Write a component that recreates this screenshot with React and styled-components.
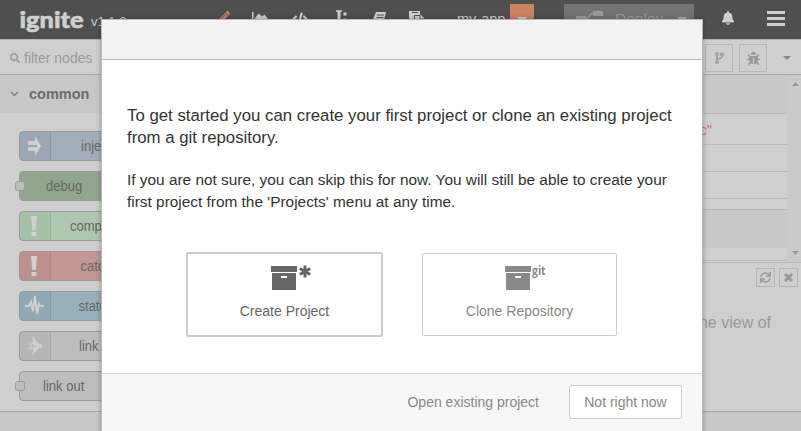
import React from "react";
import styled, { createGlobalStyle, css } from "styled-components";
import {
  FaPencilAlt, FaCode, FaBell, FaSearch, FaBug, FaSync,
} from "react-icons/fa";

const GlobalStyle = createGlobalStyle`
  *, *::before, *::after { box-sizing: border-box; }
  html, body { margin: 0; overflow: hidden; }
  body { font-family: "Liberation Sans", Arial, sans-serif; font-size: 14px; color: #333; }
  svg { display: block; flex: none; overflow: visible; }
`;

const Page = styled.div`
  position: relative;
  width: 801px;
  height: 431px;
  overflow: hidden;
  display: grid;
  grid-template-rows: 39px 1fr;
  background: #cfcfcf;
`;

const Header = styled.header`
  background: #4f4f4f;
  display: flex;
  align-items: flex-start;
  color: #cfcfcf;
`;
const Logo = styled.div`
  width: 71px;
  padding-left: 19px;
`;
const Version = styled.div`
  width: 129px;
  padding: 13px 0 0 20px;
  font-size: 13px;
  line-height: 17px;
`;
const Tools = styled.div`
  display: flex;
  width: 237px;
  height: 39px;
  padding: 11px 0 0 18px;
`;
const Tool = styled.div`
  width: ${(p) => p.$w}px;
  color: ${(p) => p.$color || "#cfcfcf"};
`;
const AppName = styled.div`
  width: 73px;
  padding: 10px 0 0 20px;
  line-height: 18px;
  font-size: 14.5px;
`;
const Caret = styled.span`
  width: 0;
  height: 0;
  border: ${(p) => p.$size}px solid transparent;
  border-top-color: ${(p) => p.$color};
  border-bottom: 0;
`;
const AppMenu = styled.div`
  width: 24px;
  height: 31px;
  margin: 4px 30px 0 0;
  background: #cd8262;
  display: flex;
  justify-content: center;
  padding-top: 13px;
`;
const Deploy = styled.div`
  width: 130px;
  height: 31px;
  margin: 4px 27px 0 0;
  background: #747474;
  color: #9a9a9a;
  display: flex;
  align-items: flex-start;
  padding: 6px 7px 0 12px;
  font-size: 15.5px;
  line-height: 18px;
`;
const DeployText = styled.span`
  flex: 1;
  padding-left: 11px;
`;
const DeployCaret = styled.span`
  padding-top: 7px;
  display: flex;
`;
const Bell = styled.div`
  width: 46px;
  padding-top: 11px;
`;
const Burger = styled.div`
  display: grid;
  gap: 3px;
  width: 18px;
  padding-top: 11px;
`;
const Bar = styled.i`
  height: 3px;
  background: #cfcfcf;
`;

const Workspace = styled.main`
  display: flex;
  justify-content: space-between;
  border-top: 1px solid #b3b3b3;
  min-height: 0;
`;
const Palette = styled.aside`
  width: 180px;
  display: flex;
  flex-direction: column;
`;
const Filter = styled.div`
  height: 35px;
  padding: 2px 0 0 10px;
  display: flex;
  align-items: center;
  gap: 4px;
  border-bottom: 1px solid #a9a9a9;
  color: #999;
  line-height: 20px;
`;
const Category = styled.div`
  height: 38px;
  background: #c8c8c8;
  display: flex;
  align-items: center;
  gap: 10px;
  padding: 0 0 1px 10px;
  font-size: 14.500px;
  font-weight: bold;
  color: #6c6c6c;
`;
const NodeList = styled.div`
  flex: 1;
  padding: 18px 0 0 19px;
  display: flex;
  flex-direction: column;
  gap: 10px;
`;
const Footer = styled.div`
  height: 20px;
  background: #c8c8c8;
  border-top: 1px solid #a8a8a8;
`;
const Node = styled.div`
  position: relative;
  width: 122px;
  height: 30px;
  border: 1px solid #999;
  border-radius: 4px;
  background: ${(p) => p.$bg};
  display: flex;
  align-items: center;
  font-size: 14px;
  color: #666;
`;
const NodeIcon = styled.span`
  width: 31px;
  height: 28px;
  flex: none;
  background: rgba(0, 0, 0, 0.035);
  border-right: 1px solid rgba(0, 0, 0, 0.08);
  padding: 3px 0 0 4px;
`;
const NodeLabel = styled.span`
  padding-left: ${(p) => p.$pad}px;
  white-space: nowrap;
  transform: scaleX(0.93);
  transform-origin: ${(p) => p.$pad}px 50%;
`;
const Port = styled.i`
  position: absolute;
  left: -5px;
  top: 9px;
  width: 10px;
  height: 10px;
  border: 1px solid #999;
  border-radius: 3px;
  background: #bebebe;
`;

const Sidebar = styled.aside`
  width: 301px;
  display: flex;
  flex-direction: column;
`;
const Tabs = styled.div`
  height: 35px;
  border-bottom: 1px solid #a9a9a9;
  display: flex;
  justify-content: flex-end;
  padding: 4px 10px 0 0;
`;
const square = css`
  border: 1px solid #b6b6b6;
  display: grid;
  place-items: center;
  color: #999;
`;
const Tab = styled.div`
  ${square}
  width: 28px;
  height: 28px;
  margin-right: 6px;
`;
const TabCaret = styled.div`
  display: flex;
  padding: 12px 0 0 10px;
`;
const InfoPane = styled.div`
  height: 188px;
  display: flex;
  border-bottom: 1px solid #b8b8b8;
`;
const Rows = styled.div`
  flex: 1;
  display: flex;
  flex-direction: column;
`;
const Row = styled.div`
  height: ${(p) => p.$h}px;
  background: ${(p) => (p.$dark ? "#c8c8c8" : "#cfcfcf")};
  border-bottom: ${(p) => (p.$line ? "1px solid #b9b9b9" : "0")};
  display: flex;
  align-items: center;
  justify-content: flex-end;
  padding: 2px 75px 0 0;
  color: #d36d58;
  font-size: 14px;
`;
const Scroll = styled.div`
  width: 14px;
  background: #cacaca;
  display: flex;
  flex-direction: column;
  justify-content: space-between;
  padding: 7px 0 7px 5px;
`;
const HelpPane = styled.div`
  flex: 1;
  color: #999;
`;
const HelpButtons = styled.div`
  display: flex;
  justify-content: flex-end;
  gap: 4px;
  padding: 5px 3px 0 0;
`;
const SmallButton = styled.div`
  ${square}
  width: 19px;
  height: 19px;
`;
const HelpText = styled.div`
  padding: 26px 30px 0 0;
  text-align: right;
  font-size: 16px;
  line-height: 20px;
`;

const Dialog = styled.section`
  position: absolute;
  left: 101px;
  top: 19px;
  width: 602px;
  height: 430px;
  border: 1px solid #b9b9b9;
  background: #fff;
  box-shadow: 0 0 5px rgba(0, 0, 0, 0.3);
  display: flex;
  flex-direction: column;
`;
const DialogTitle = styled.div`
  height: 40px;
  background: #f2f2f2;
  border-bottom: 1px solid #b9b9b9;
`;
const DialogBody = styled.div`
  height: 313px;
  padding: 45px 25px 0;
`;
const Intro = styled.p`
  margin: 0 0 20px;
  font-size: ${(p) => p.$size}px;
  line-height: 22px;
  color: #333;
  white-space: nowrap;
`;
const Choices = styled.div`
  display: flex;
  gap: 39px;
  padding: 19px 0 0 59px;
`;
const Choice = styled.div`
  width: ${(p) => (p.$active ? 197 : 195)}px;
  height: ${(p) => (p.$active ? 85 : 83)}px;
  margin-top: ${(p) => (p.$active ? 0 : 1)}px;
  border: ${(p) => (p.$active ? 2 : 1)}px solid #ccc;
  border-radius: 2px;
  color: ${(p) => (p.$active ? "#666" : "#888")};
  display: flex;
  flex-direction: column;
  align-items: center;
  font-size: 14px;
`;
const ChoiceIcon = styled.div`
  display: flex;
  gap: ${(p) => p.$gap}px;
  height: 36px;
  padding: 12px 0 0 12px;
`;
const ChoiceText = styled.div`
  line-height: 20px;
  padding-top: 11px;
`;
const Git = styled.span`
  font: bold 13px/14px "Open Sans", sans-serif;
  margin-top: -3px;
  width: 14px;
  transform: scaleX(0.8);
  transform-origin: 0 0;
`;
const Actions = styled.div`
  flex: 1;
  background: #f7f7f7;
  border-top: 1px solid #dbdbdb;
  display: flex;
  justify-content: flex-end;
  gap: 30px;
  padding: 11px 20px 0 0;
  color: #888;
  line-height: 34px;
`;
const Button = styled.div`
  width: 113px;
  height: 34px;
  line-height: 32px;
  border: 1px solid #ccc;
  border-radius: 2px;
  background: #fff;
  text-align: center;
`;

const Wordmark = () => (
  <svg width="68" height="39" fill="#cfcfcf" stroke="#cfcfcf" strokeWidth="0.6">
    <text x="0.500" y="27.500" fontFamily="Lato" fontWeight="900" fontSize="23" textLength="64" lengthAdjust="spacingAndGlyphs">ignite</text>
  </svg>
);
const Archive = () => (
  <svg width="26" height="24" fill="currentColor">
    <path d="M0 0h26v6H0zM1 7h24v17H1zM10 10v2h6v-2z" fillRule="evenodd" />
  </svg>
);
const Asterisk = () => (
  <svg width="12" height="12" stroke="currentColor" strokeWidth="3">
    <path d="M6 -0.500v12M0.800 2.500l10.400 6M11.200 2.500l-10.400 6" />
  </svg>
);
const Area = () => (
  <svg width="16" height="16" fill="currentColor">
    <path d="M0 1h1.500v12H16v1.500H0zM3 12V7l3.500-4.500L10 5.500l2.500-2L16 8v4z" />
  </svg>
);
const Cursor = () => (
  <svg width="12" height="16" fill="none" stroke="currentColor" strokeWidth="1.500">
    <path d="M0 0h6M0 15h6M3 0v15" />
    <path d="M3 0v15M7.500 3h3M7.500 9h3" strokeWidth="3" />
  </svg>
);
const Book = () => (
  <svg width="15" height="14" fill="currentColor">
    <path d="M4 1h10l-3 12H1L0 11z" />
    <path d="M5 4h7M4.500 6.500h7" stroke="#4f4f4f" />
  </svg>
);
const Paste = () => (
  <svg width="16" height="16" fill="currentColor">
    <path d="M0 0h11v4h1l3 3v8H6v-3H0z" />
    <path d="M3 1.500h6M5.500 12V4.500H11M11 4.500V8h4" stroke="#4f4f4f" fill="none" />
  </svg>
);
const Flow = () => (
  <svg width="28" height="18" fill="#9a9a9a">
    <path d="M0 6h10v5H0zM17 1h10v5H17zM17 12h10v5H17z" />
    <path d="M10 8.500C15 8.500 12 3.500 17 3.500M10 8.500C15 8.500 12 14.500 17 14.500" fill="none" stroke="#9a9a9a" strokeWidth="1.500" />
  </svg>
);
const Fork = () => (
  <svg width="9" height="12" fill="none" stroke="currentColor" strokeWidth="1.300">
    <circle cx="2" cy="2" r="1.300" /><circle cx="7" cy="2.500" r="1.300" /><circle cx="2" cy="10" r="1.300" />
    <path d="M2 3.500v5M7 4c0 3-4.500 2-5 4.500" strokeWidth="1.600" />
  </svg>
);
const Cross = () => (
  <svg width="9" height="9" stroke="currentColor" strokeWidth="3"><path d="M1 1l7 7M8 1L1 8" /></svg>
);
const Triangle = ({ up }) => (
  <svg width="7" height="4" fill="#999"><path d={up ? "M0 4L3.500 0L7 4z" : "M0 0H7L3.500 4z"} /></svg>
);
const Chevron = () => (
  <svg width="9" height="6" fill="none" stroke="#808080" strokeWidth="1.500"><path d="M1 1l3.500 3.500L8 1" /></svg>
);

const glyphs = {
  arrow: (
    <>
      <path d="M4 6h7V1l6 10-6 10v-5H4v-4h9v-2H4z" />
      <path d="M4 10h9v2H4z" fill="#9aa4b0" />
    </>
  ),
  bang: <path d="M7 1h6l-1.200 14H8.200zM7.500 17h4.800v4H7.500z" />,
  pulse: <path d="M1 11h4l2-4 2 9 2-15 2 18 2-10 1 2h4" fill="none" stroke="#d0d0d0" strokeWidth="2" />,
  link: (
    <>
      <path d="M8 1l7 8h3v4h-3L8 21l1.500-6H4v-2.500h2q2-1.500 0-3H4V7h5.500z" />
      <path d="M4 8q5-0.500 5 3t-5 3M9 11h3" fill="none" stroke="#b5b5b5" strokeWidth="1.200" />
    </>
  ),
};
const nodes = [
  { label: "inject", bg: "#a3aeba", icon: "arrow", pad: 30 },
  { label: "debug", bg: "#92a58f", pad: 26, port: true },
  { label: "complete", bg: "#aec7af", icon: "bang", pad: 19 },
  { label: "catch", bg: "#c49696", icon: "bang", pad: 29.5 },
  { label: "status", bg: "#97b0ba", icon: "pulse", pad: 27.5 },
  { label: "link in", bg: "#bdbdbd", icon: "link", pad: 28 },
  { label: "link out", bg: "#bdbdbd", pad: 23, port: true },
];

export default function App() {
  return (
    <Page>
      <GlobalStyle />
      <Header>
        <Logo><Wordmark /></Logo>
        <Version>v1.1.2</Version>
        <Tools>
          <Tool $w={34} $color="#cd7f60"><FaPencilAlt size={12} /></Tool>
          <Tool $w={40}><Area /></Tool>
          <Tool $w={44}><FaCode size={16} /></Tool>
          <Tool $w={36}><Cursor /></Tool>
          <Tool $w={37}><Book /></Tool>
          <Tool $w={20}><Paste /></Tool>
        </Tools>
        <AppName>my-app</AppName>
        <AppMenu><Caret $size={5} $color="#cfcfcf" /></AppMenu>
        <Deploy>
          <Flow />
          <DeployText>Deploy</DeployText>
          <DeployCaret><Caret $size={5} $color="#b0b0b0" /></DeployCaret>
        </Deploy>
        <Bell><FaBell size={14} /></Bell>
        <Burger><Bar /><Bar /><Bar /></Burger>
      </Header>
      <Workspace>
        <Palette>
          <Filter><FaSearch size={10} />filter nodes</Filter>
          <Category><Chevron />common</Category>
          <NodeList>
            {nodes.map((n) => (
              <Node key={n.label} $bg={n.bg}>
                {n.icon && <NodeIcon><svg width="20" height="22" fill="#d0d0d0">{glyphs[n.icon]}</svg></NodeIcon>}
                {n.port && <Port />}
                <NodeLabel $pad={n.pad}>{n.label}</NodeLabel>
              </Node>
            ))}
          </NodeList>
          <Footer />
        </Palette>
        <Sidebar>
          <Tabs>
            <Tab><Fork /></Tab>
            <Tab><FaBug size={13} /></Tab>
            <TabCaret><Caret $size={4} $color="#888" /></TabCaret>
          </Tabs>
          <InfoPane>
            <Rows>
              <Row $h={39} $dark $line />
              <Row $h={31} $line>"topic"</Row>
              <Row $h={27} $line />
              <Row $h={27} $line />
              <Row $h={11} $line />
              <Row $h={38} $dark />
              <Row $h={13} $line />
            </Rows>
            <Scroll><Triangle up /><Triangle /></Scroll>
          </InfoPane>
          <HelpPane>
            <HelpButtons>
              <SmallButton><FaSync size={11} /></SmallButton>
              <SmallButton><Cross /></SmallButton>
            </HelpButtons>
            <HelpText>the view of</HelpText>
          </HelpPane>
          <Footer />
        </Sidebar>
      </Workspace>
      <Dialog>
        <DialogTitle />
        <DialogBody>
          <Intro $size={16.8}>To get started you can create your first project or clone an existing project<br />from a git repository.</Intro>
          <Intro $size={15.4}>If you are not sure, you can skip this for now. You will still be able to create your<br />first project from the 'Projects' menu at any time.</Intro>
          <Choices>
            <Choice $active>
              <ChoiceIcon $gap={2}><Archive /><Asterisk /></ChoiceIcon>
              <ChoiceText>Create Project</ChoiceText>
            </Choice>
            <Choice>
              <ChoiceIcon $gap={1}><Archive /><Git>git</Git></ChoiceIcon>
              <ChoiceText>Clone Repository</ChoiceText>
            </Choice>
          </Choices>
        </DialogBody>
        <Actions>
          <span>Open existing project</span>
          <Button>Not right now</Button>
        </Actions>
      </Dialog>
    </Page>
  );
}
